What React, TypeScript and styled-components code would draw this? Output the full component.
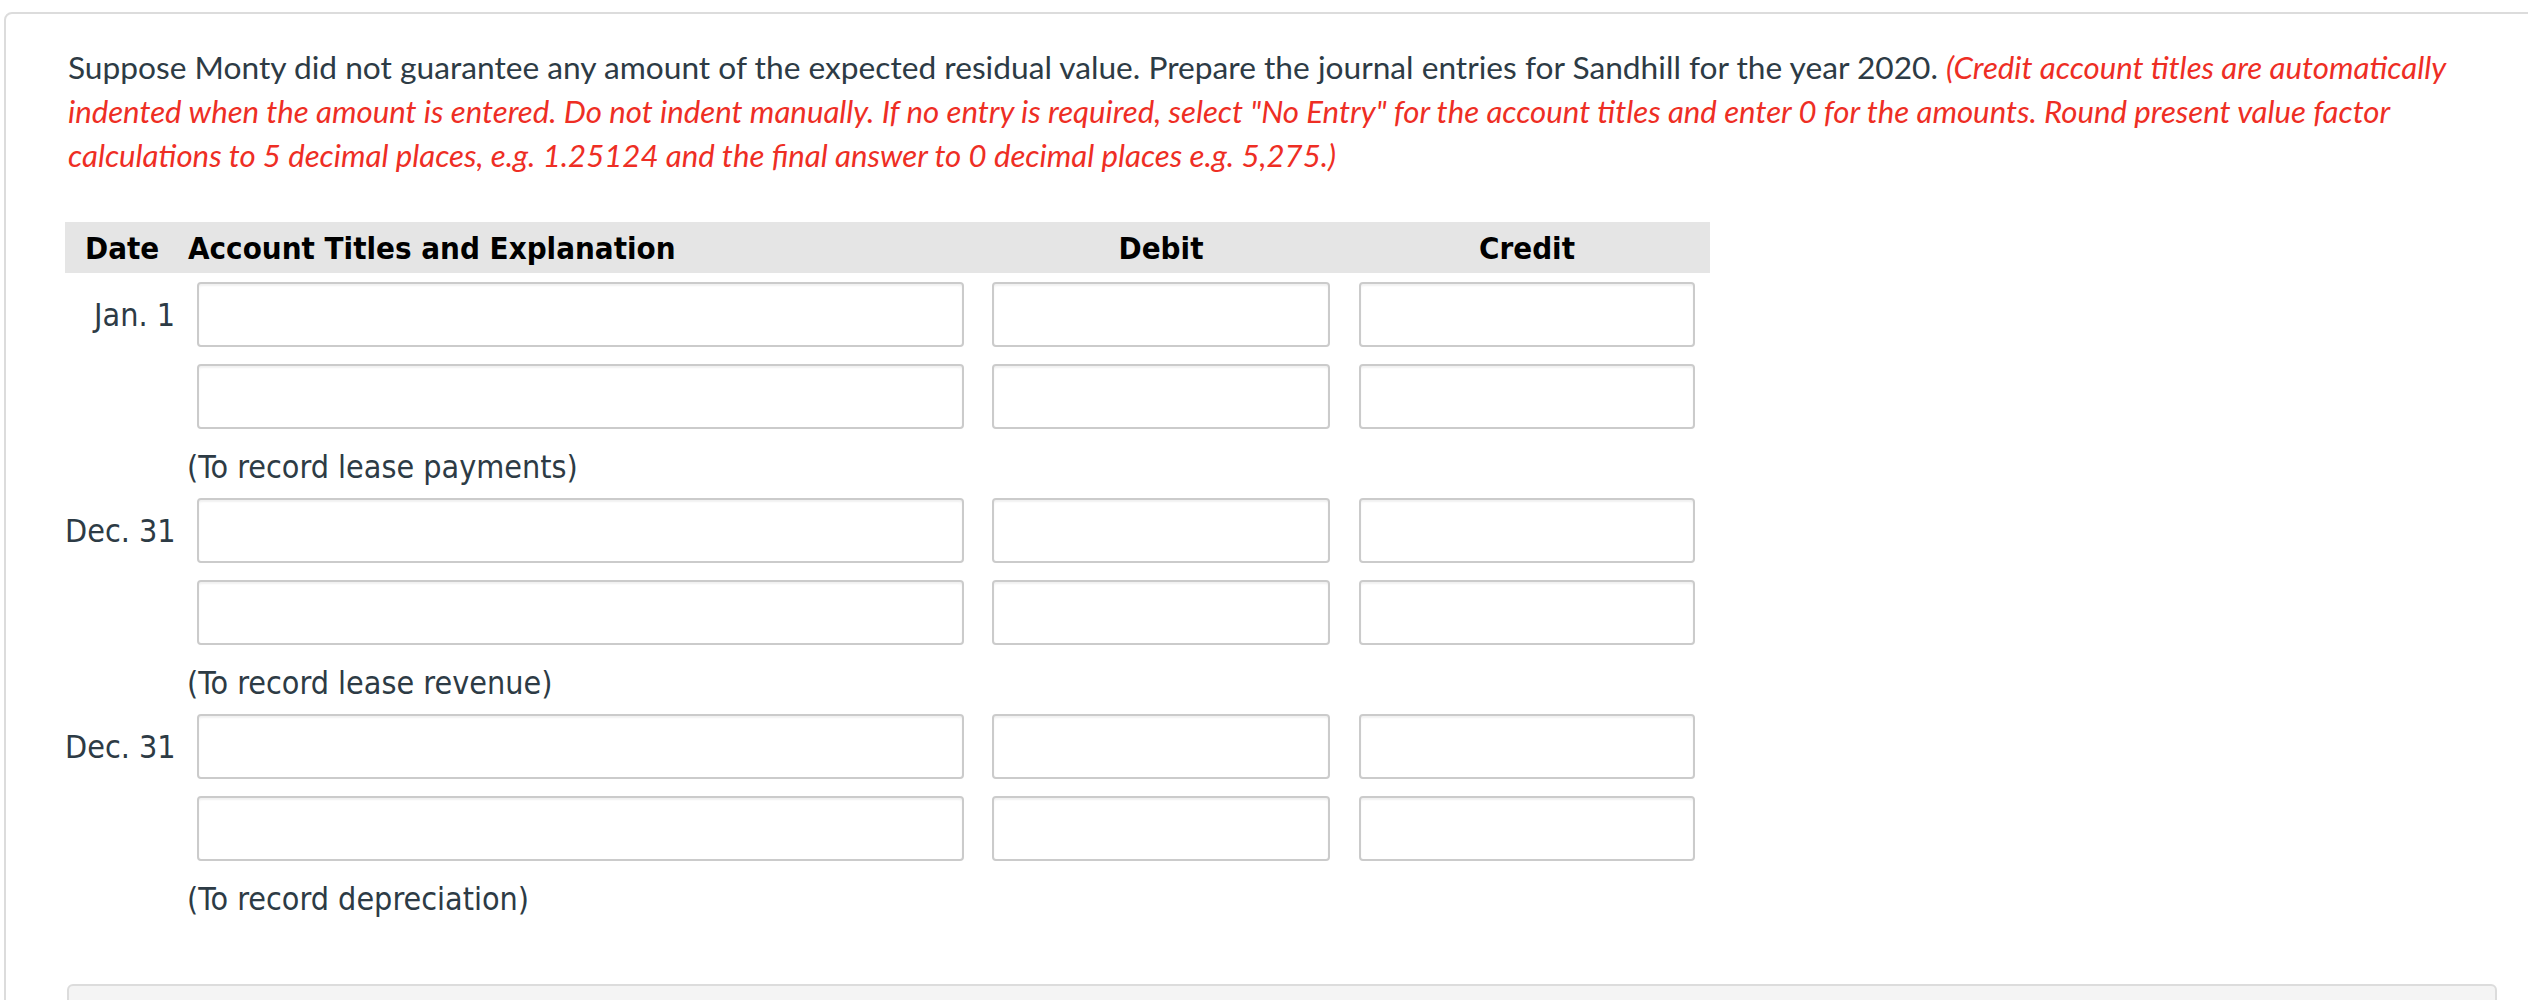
import React from "react";
import styled, { createGlobalStyle } from "styled-components";

// Types -------------------------------------------------------------------------

interface IEntry {
  date: string;
  memo: string;
}

const entries: IEntry[] = [
  { date: "Jan. 1", memo: "(To record lease payments)" },
  { date: "Dec. 31", memo: "(To record lease revenue)" },
  { date: "Dec. 31", memo: "(To record depreciation)" },
];

const COLS = "122px 791px 367px 365px";

// Component ---------------------------------------------------------------------

const App: React.FC = () => {
  return (
    <>
      <GlobalStyle />
      <Card>
        <Question>
          Suppose Monty did not guarantee any amount of the expected residual
          value. Prepare the journal entries for Sandhill for the year 2020.{" "}
          <Hint>
            (Credit account titles are automatically indented when the amount
            is entered. Do not indent manually. If no entry is required, select
            "No Entry" for the account titles and enter 0 for the amounts.
            Round present value factor calculations to 5 decimal places, e.g.
            1.25124 and the final answer to 0 decimal places e.g. 5,275.)
          </Hint>
        </Question>

        <Journal>
          <HeadRow>
            <HeadCell $pad="0 0 0 20px">Date</HeadCell>
            <HeadCell $pad="0 0 0 1px">Account Titles and Explanation</HeadCell>
            <HeadCell $pad="0 15px 0 14px" $center>
              Debit
            </HeadCell>
            <HeadCell $pad="0 15px 0 14px" $center>
              Credit
            </HeadCell>
          </HeadRow>

          <Body>
            {entries.map((entry, i) => (
              <Group key={i}>
                {[0, 1].map((line) => (
                  <EntryRow key={line} $first={line === 0}>
                    <DateCell>{line === 0 ? entry.date : ""}</DateCell>
                    <FieldCell $pad="0 14px 0 10px">
                      <Field type="text" />
                    </FieldCell>
                    <FieldCell $pad="0 15px 0 14px">
                      <Field type="text" />
                    </FieldCell>
                    <FieldCell $pad="0 15px 0 14px">
                      <Field type="text" />
                    </FieldCell>
                  </EntryRow>
                ))}
                <MemoRow>
                  <span />
                  <Memo>{entry.memo}</Memo>
                </MemoRow>
              </Group>
            ))}
          </Body>
        </Journal>

        <Footer />
      </Card>
    </>
  );
};

export default App;

// Styled ------------------------------------------------------------------------

const GlobalStyle = createGlobalStyle`
  html, body {
    margin: 0;
    padding: 0;
    background: #ffffff;
    overflow: hidden;
  }
`;

const Card = styled.div`
  box-sizing: border-box;
  width: 2556px;
  margin: 12px 0 0 4px;
  padding: 31px 62px 0;
  border: 2px solid #dcdcdc;
  border-radius: 8px;
  min-height: 1100px;
`;

const Question = styled.p`
  margin: 0;
  font-family: Lato, "Open Sans", sans-serif;
  font-size: 31.7px;
  line-height: 44px;
  color: #2d3b45;
`;

const Hint = styled.em`
  color: #ee2e24;
  font-style: italic;
  font-size: 31.2px;
`;

const Journal = styled.div`
  width: 1645px;
  margin: 45px 0 0 -3px;
  font-family: Tahoma, "DejaVu Sans Condensed", "DejaVu Sans", sans-serif;
`;

const HeadRow = styled.div`
  display: grid;
  grid-template-columns: ${COLS};
  align-items: center;
  height: 51px;
  background: #e5e5e5;
  color: #000000;
  font-size: 31px;
  font-weight: 700;
`;

const HeadCell = styled.div<{ $pad: string; $center?: boolean }>`
  padding: ${({ $pad }) => $pad};
  text-align: ${({ $center }) => ($center ? "center" : "left")};
  white-space: nowrap;
`;

const Body = styled.div`
  padding-top: 9px;
`;

const Group = styled.div`
  display: flex;
  flex-direction: column;
`;

const EntryRow = styled.div<{ $first: boolean }>`
  display: grid;
  grid-template-columns: ${COLS};
  align-items: center;
  height: 65px;
  margin-top: ${({ $first }) => ($first ? "0" : "17px")};
`;

const DateCell = styled.div`
  padding-right: 12px;
  text-align: right;
  font-size: 32px;
  color: #2d3b45;
  white-space: nowrap;
`;

const FieldCell = styled.div<{ $pad: string }>`
  padding: ${({ $pad }) => $pad};
  height: 100%;
`;

const Field = styled.input`
  box-sizing: border-box;
  display: block;
  width: 100%;
  height: 100%;
  margin: 0;
  border: 2px solid #cbcbcb;
  border-radius: 4px;
  background: #ffffff;
  box-shadow: inset 0 2px 2px rgba(0, 0, 0, 0.06);
  outline: none;
`;

const MemoRow = styled.div`
  box-sizing: border-box;
  display: grid;
  grid-template-columns: ${COLS};
  align-items: start;
  height: 69px;
  padding-top: 20px;
`;

const Memo = styled.div`
  font-size: 32px;
  line-height: 36px;
  color: #2d3b45;
  white-space: nowrap;
`;

const Footer = styled.div`
  height: 120px;
  margin: 54px -1px 0;
  background: #f4f4f4;
  border: 2px solid #dcdcdc;
  border-radius: 6px;
`;
